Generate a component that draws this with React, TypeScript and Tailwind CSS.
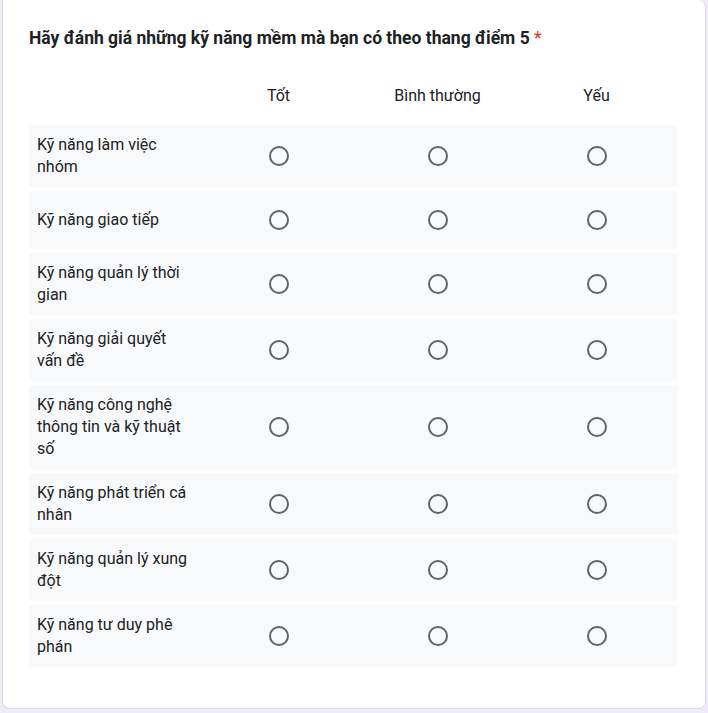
import React from "react";

const rows = [
  "Kỹ năng làm việc nhóm",
  "Kỹ năng giao tiếp",
  "Kỹ năng quản lý thời gian",
  "Kỹ năng giải quyết vấn đề",
  "Kỹ năng công nghệ thông tin và kỹ thuật số",
  "Kỹ năng phát triển cá nhân",
  "Kỹ năng quản lý xung đột",
  "Kỹ năng tư duy phê phán",
];

const cols = ["Tốt", "Bình thường", "Yếu"];

function Radio() {
  return (
    <div className="flex h-10 items-center justify-center">
      <div className="h-[20px] w-[20px] rounded-full border-2 border-[#5f6368]" />
    </div>
  );
}

export default function App() {
  return (
    <div
      className="h-[713px] w-[708px] bg-[#f0ebf8] px-[2px]"
      style={{ fontFamily: "Roboto, 'Noto Sans', Arial, sans-serif" }}
    >
      <div className="h-[709px] rounded-b-lg rounded-tr-lg border border-t-0 border-[#dadce0] bg-white pl-[26px] pr-[27px] pt-[26px] text-[#202124]">
        <h1 className="text-[17.5px] font-bold leading-6">
          Hãy đánh giá những kỹ năng mềm mà bạn có theo thang điểm 5{" "}
          <span className="font-normal text-[#d93025]">*</span>
        </h1>
        <div className="mt-[26px] grid h-10 grid-cols-[170px_159px_159px_159px] items-center text-[16px] leading-[22px]">
          <div />
          {cols.map((c) => (
            <div key={c} className="text-center">
              {c}
            </div>
          ))}
        </div>
        <div className="mt-[9px] flex flex-col gap-1">
          {rows.map((r) => (
            <div
              key={r}
              className="grid grid-cols-[170px_159px_159px_159px] items-center rounded-[4px] bg-[#f8f9fa] py-[9px]"
            >
              <div className="pl-2 pr-[10px] text-[16px] leading-[22px]">{r}</div>
              <Radio />
              <Radio />
              <Radio />
            </div>
          ))}
        </div>
      </div>
    </div>
  );
}
